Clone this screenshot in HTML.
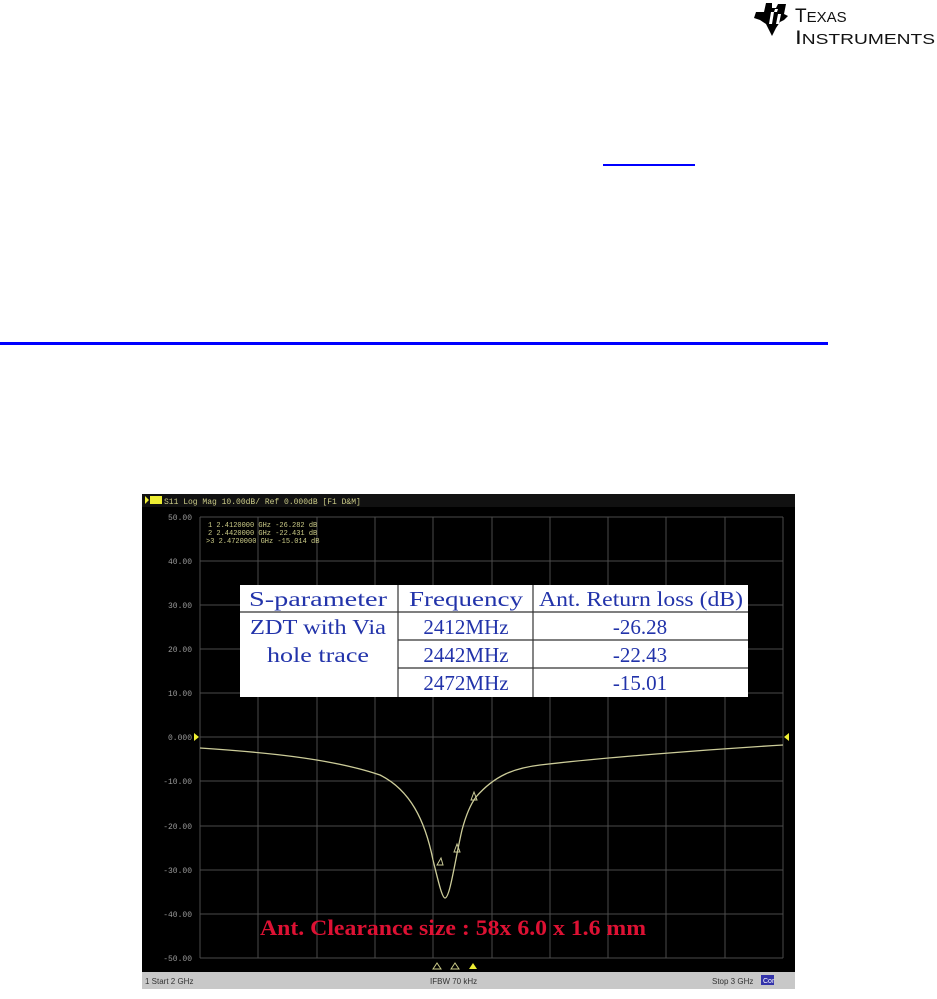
<!DOCTYPE html>
<html><head><style>
body{margin:0;width:937px;height:999px;background:#fff;position:relative;overflow:hidden;font-family:"Liberation Sans",sans-serif}
.abs{position:absolute}
</style></head><body>
<!-- TI logo -->
<svg class="abs" style="left:752px;top:0" width="40" height="40" viewBox="0 0 40 40">
<path d="M14 3 L20 3 L20 8 L24 8 L26 4 L34 4 L32 14 L36 16 L32 20 L28 22 L24 28 L20 36 L17 30 L14 24 L8 20 L2 18 L4 12 L12 12 Z" fill="#000"/>
<path d="M19 12 L22 12 L20 24 L17 24 Z M23 9 L26 9 L25 12 L22 12 Z M26 14 L29 14 L27 24 L24 24 Z" fill="#fff"/>
</svg>
<svg class="abs" style="left:793px;top:2px" width="144" height="46">
<text x="2" y="20" font-family="Liberation Sans" font-size="19" fill="#111">T<tspan font-size="15">EXAS</tspan></text>
<text x="2" y="42" font-family="Liberation Sans" font-size="19" fill="#111" textLength="140" lengthAdjust="spacingAndGlyphs">I<tspan font-size="15">NSTRUMENTS</tspan></text>
</svg>
<div class="abs" style="left:603px;top:164px;width:92px;height:2px;background:#00f"></div>
<div class="abs" style="left:0;top:342px;width:828px;height:3px;background:#00f"></div>

<svg class="abs" style="left:142px;top:494px" width="653" height="495" viewBox="142 494 653 495">
<rect x="142" y="494" width="653" height="495" fill="#000"/>
<rect x="142" y="494" width="653" height="13" fill="#111"/>
<rect x="150" y="496" width="12" height="8" fill="#ee3"/>
<polygon points="145,496 149,500 145,504" fill="#ee3"/>
<text x="164" y="504" font-family="Liberation Mono" font-size="8" fill="#cc8">S11 Log Mag 10.00dB/ Ref 0.000dB [F1 D&amp;M]</text>
<g stroke="#4a4a4a" stroke-width="1">
<line x1="200" y1="517" x2="783" y2="517"/><line x1="200" y1="561" x2="783" y2="561"/><line x1="200" y1="605" x2="783" y2="605"/><line x1="200" y1="649" x2="783" y2="649"/><line x1="200" y1="693" x2="783" y2="693"/><line x1="200" y1="737" x2="783" y2="737"/><line x1="200" y1="781" x2="783" y2="781"/><line x1="200" y1="826" x2="783" y2="826"/><line x1="200" y1="870" x2="783" y2="870"/><line x1="200" y1="914" x2="783" y2="914"/><line x1="200" y1="958" x2="783" y2="958"/>
<line x1="200" y1="517" x2="200" y2="958"/><line x1="258" y1="517" x2="258" y2="958"/><line x1="317" y1="517" x2="317" y2="958"/><line x1="375" y1="517" x2="375" y2="958"/><line x1="433" y1="517" x2="433" y2="958"/><line x1="492" y1="517" x2="492" y2="958"/><line x1="550" y1="517" x2="550" y2="958"/><line x1="608" y1="517" x2="608" y2="958"/><line x1="666" y1="517" x2="666" y2="958"/><line x1="725" y1="517" x2="725" y2="958"/><line x1="783" y1="517" x2="783" y2="958"/>
</g>
<g font-family="Liberation Mono" font-size="8" fill="#999" text-anchor="end">
<text x="192" y="520">50.00</text><text x="192" y="564">40.00</text><text x="192" y="608">30.00</text><text x="192" y="652">20.00</text><text x="192" y="696">10.00</text><text x="192" y="740">0.000</text><text x="192" y="784">-10.00</text><text x="192" y="829">-20.00</text><text x="192" y="873">-30.00</text><text x="192" y="917">-40.00</text><text x="192" y="961">-50.00</text>
</g>
<g font-family="Liberation Mono" font-size="7" fill="#cc8">
<text x="208" y="527">1  2.4120000 GHz -26.282 dB</text>
<text x="208" y="535">2  2.4420000 GHz -22.431 dB</text>
<text x="206" y="543">&gt;3  2.4720000 GHz -15.014 dB</text>
</g>
<polygon points="194,733 199,737 194,741" fill="#ee3"/>
<polygon points="789,733 784,737 789,741" fill="#ee3"/>
<path d="M200 748 C260 752 330 758 380 775 C410 790 425 820 433 860 C438 880 442 898 445 898 C450 898 455 860 462 830 C466 815 470 805 476 797 C495 775 515 768 540 765 C600 758 700 750 783 745" fill="none" stroke="#cc9" stroke-width="1.3"/>
<g fill="none" stroke="#cc9" stroke-width="1"><path d="M437 865 L441 858 L443 865Z"/><path d="M454 852 L457 844 L460 852Z"/><path d="M471 800 L474 792 L477 800Z"/></g>
<g fill="none" stroke="#cc8"><polygon points="433,969 437,963 441,969"/><polygon points="451,969 455,963 459,969"/></g>
<polygon points="469,969 473,963 477,969" fill="#ee3"/>
<rect x="240" y="585" width="508" height="112" fill="#fff"/>
<g stroke="#333" stroke-width="1.2" fill="none">
<line x1="240" y1="612" x2="748" y2="612"/><line x1="398" y1="640" x2="748" y2="640"/><line x1="398" y1="668" x2="748" y2="668"/>
<line x1="398" y1="585" x2="398" y2="697"/><line x1="533" y1="585" x2="533" y2="697"/>
</g>
<g font-family="Liberation Serif" font-size="21" fill="#2233aa" text-anchor="middle">
<text x="318" y="606" textLength="138" lengthAdjust="spacingAndGlyphs">S-parameter</text><text x="466" y="606" textLength="114" lengthAdjust="spacingAndGlyphs">Frequency</text><text x="641" y="606" textLength="204" lengthAdjust="spacingAndGlyphs">Ant. Return loss (dB)</text>
<text x="318" y="634" textLength="136" lengthAdjust="spacingAndGlyphs">ZDT with Via</text><text x="318" y="662" textLength="102" lengthAdjust="spacingAndGlyphs">hole trace</text>
<text x="466" y="634">2412MHz</text><text x="466" y="662">2442MHz</text><text x="466" y="690">2472MHz</text>
<text x="640" y="634">-26.28</text><text x="640" y="662">-22.43</text><text x="640" y="690">-15.01</text>
</g>
<text x="260" y="935" font-family="Liberation Serif" font-weight="bold" font-size="22" fill="#dd1133" textLength="386" lengthAdjust="spacingAndGlyphs">Ant. Clearance size : 58x 6.0 x 1.6 mm</text>
<rect x="142" y="972" width="653" height="17" fill="#c8c8c8"/>
<g font-family="Liberation Sans" font-size="8" fill="#333"><text x="145" y="984">1  Start 2 GHz</text><text x="430" y="984">IFBW 70 kHz</text><text x="712" y="984">Stop 3 GHz</text></g>
<rect x="761" y="975" width="13" height="10" fill="#33a"/><text x="763" y="983" font-size="7" fill="#fff" font-family="Liberation Sans">Cor</text>
</svg>
</body></html>
